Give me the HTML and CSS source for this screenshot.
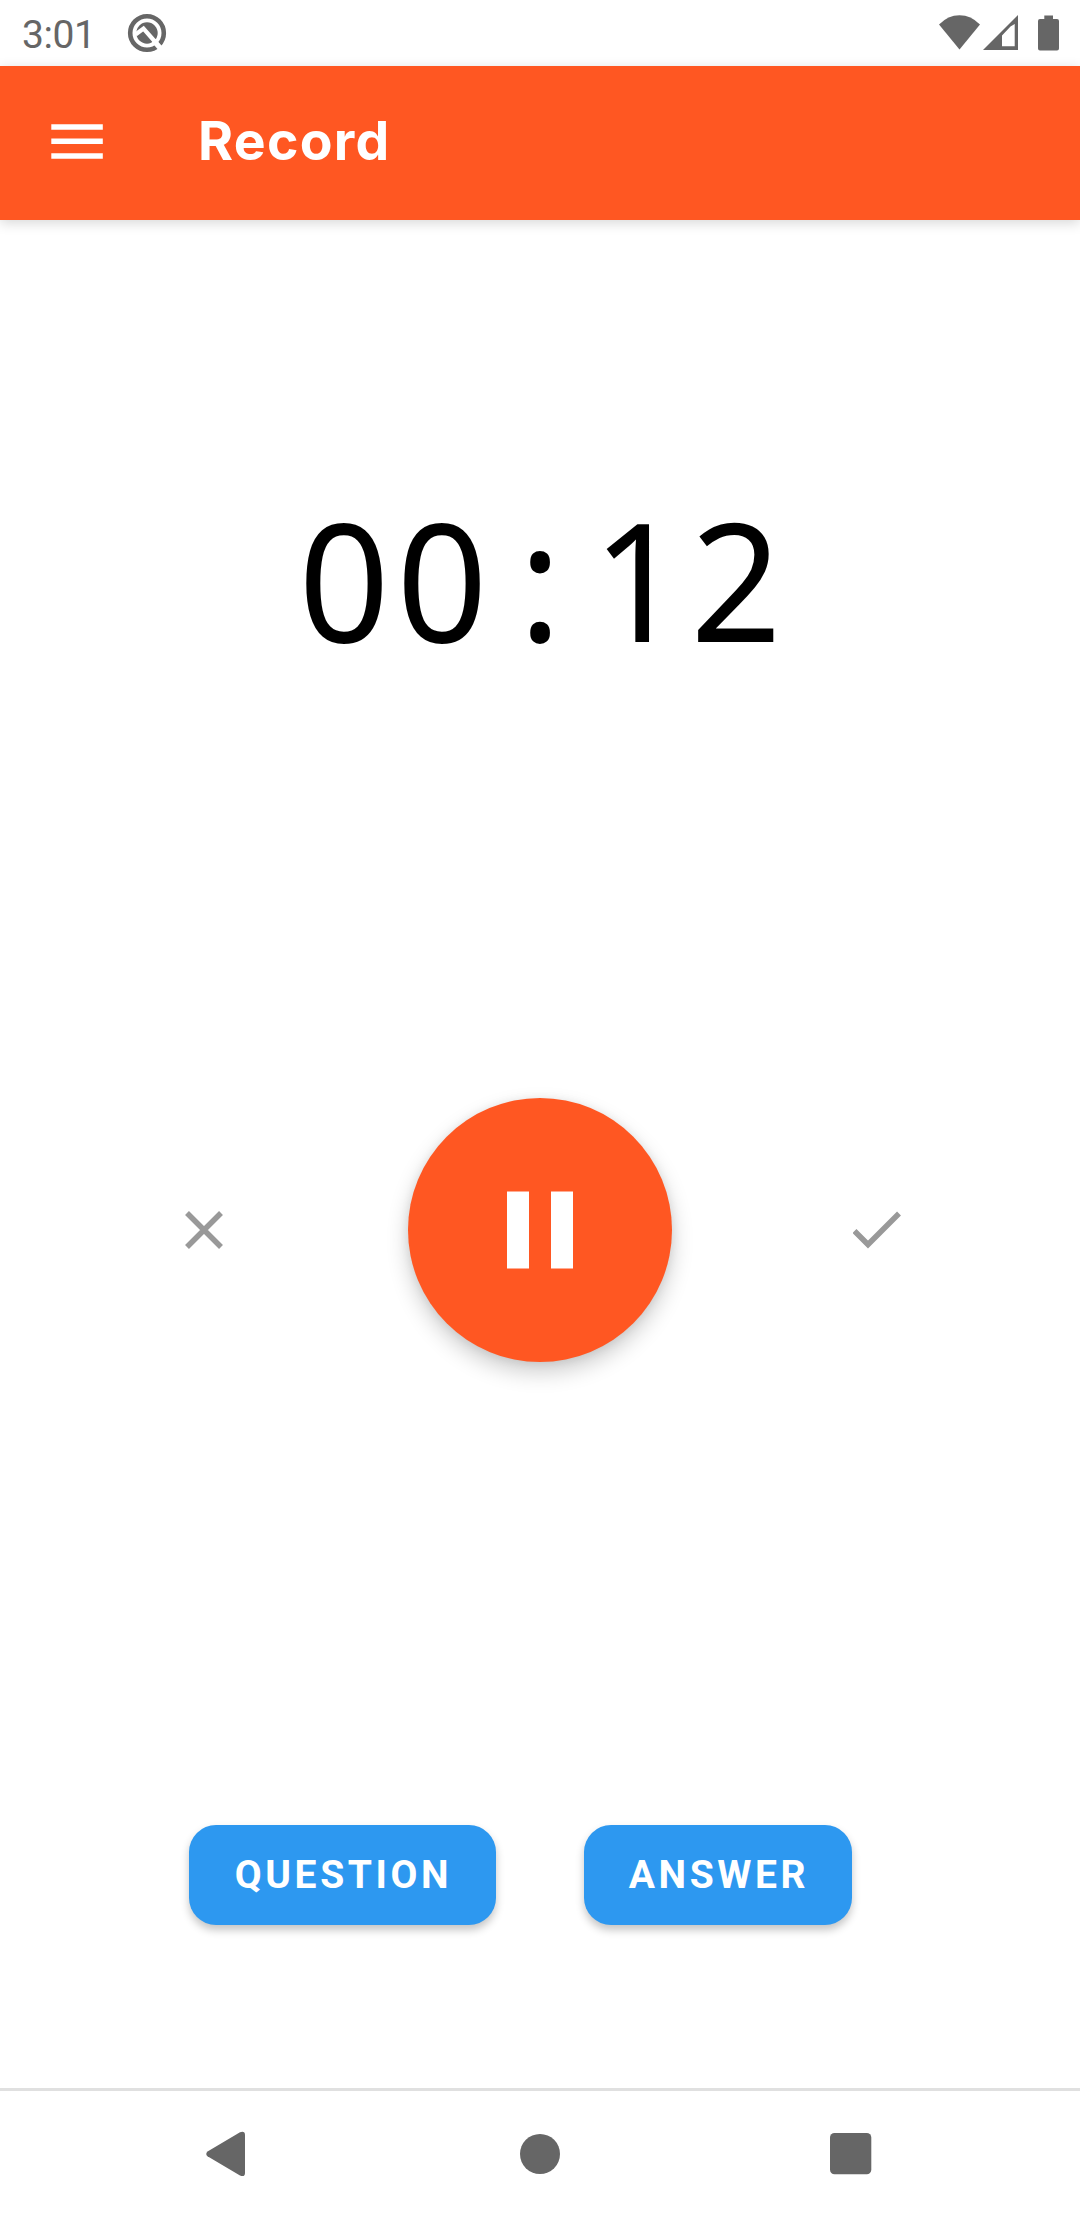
FILE: index.html
```html
<!DOCTYPE html>
<html lang="en">
<head>
<meta charset="utf-8">
<title>Record</title>
<link rel="stylesheet" href="styles.css">
</head>
<body>
<div class="screen">
  <header class="status">
    <span class="clock">3:01</span>
    <svg class="q-icon" width="40" height="40" viewBox="0 0 40 40">
      <circle cx="20" cy="20" r="16.8" fill="none" stroke="#666" stroke-width="4.6"/>
      <circle cx="20" cy="20" r="10.7" fill="#666"/>
      <path d="M8.500 21.500L16.500 15.500L34 35.500" fill="none" stroke="#fff" stroke-width="4.200"/>
      <path d="M26.500 27.500L33.500 35.500" stroke="#fff" stroke-width="5"/>
    </svg>
    <svg class="signals" width="124" height="40" viewBox="936 12 124 40" fill="#666">
      <path d="M958.500 49.500L938 24.500Q947 15.200 958.500 15.200T979 24.500Z"/>
      <path fill-rule="evenodd" d="M982 50L1017 15V50ZM1001 46.300H1013.700V24L1009.500 26.500L1001 35.500Z"/>
      <path d="M1043.300 15.500h8.700v3.500h4q2 0 2 2v27.500q0 2-2 2h-17q-2 0-2-2V21q0-2 2-2h4.300z"/>
    </svg>
  </header>
  <div class="appbar">
    <svg width="52" height="36" viewBox="0 0 52 36" fill="#fff">
      <path d="M.3 0.300h51.500v5.500H.3zM.3 14.500h51.500v5.500H.3zM.3 29.200h51.500v5.500H.3z"/>
    </svg>
    <h1>Record</h1>
  </div>
  <main>
    <div class="timer"><span>0</span><span>0</span><span>:</span><span>1</span><span>2</span></div>
    <div class="controls">
      <svg width="38" height="38" viewBox="0 0 38 38" fill="none" stroke="#999" stroke-width="5.500">
        <path d="M2 2L36 36M36 2L2 36"/>
      </svg>
      <button class="pause" aria-label="Pause">
        <svg width="66" height="78" viewBox="0 0 66 78" fill="#fff"><path d="M0 .5h22v77H0zM44 .5h22v77H44z"/></svg>
      </button>
      <svg width="48" height="38" viewBox="0 0 48 38" fill="none" stroke="#999" stroke-width="5.500">
        <path d="M1.500 20L15 33.500L46 2.500"/>
      </svg>
    </div>
    <div class="actions">
      <button class="btn question">QUESTION</button>
      <button class="btn answer">ANSWER</button>
    </div>
  </main>
  <nav>
    <svg width="40" height="46" viewBox="0 0 40 46" fill="#666">
      <path d="M1.500 20.500L34 1.200Q39 -.5 39 4V42Q39 46.500 34 44.500L1.500 25.300Q-1 23 1.500 20.500Z"/>
    </svg>
    <svg width="40" height="40" viewBox="0 0 40 40" fill="#666"><circle cx="20" cy="20" r="20"/></svg>
    <svg width="42" height="42" viewBox="0 0 42 42" fill="#666"><rect width="41.300" height="41.300" rx="4.500"/></svg>
  </nav>
</div>
</body>
</html>
```
FILE: styles.css
```css
* { box-sizing: border-box; }
body { margin: 0; background: #fff; font-family: Roboto, sans-serif; }
button { border: 0; padding: 0; font: inherit; color: #fff; }
svg { display: block; flex: none; }
.screen { width: 1080px; height: 2220px; display: flex; flex-direction: column; }
.status { height: 66px; display: flex; align-items: center; padding: 0 19px 0 22px; color: #666; }
.clock { width: 104.5px; font-size: 39px; line-height: 66px; padding-top: 3px; letter-spacing: -.4px; }
.signals { margin-left: auto; margin-top: -2px; }
.appbar {
  height: 154px; display: flex; align-items: center; padding-left: 51px; gap: 95px;
  background: #ff5722; color: #fff; box-shadow: 0 3px 12px rgba(0, 0, 0, .16);
}
.appbar svg { margin-top: -3px; }
h1 { margin: -5px 0 0; font: 700 53.5px/64px Inter, sans-serif; letter-spacing: 1.3px; }
main { flex: 1; display: flex; flex-direction: column; }
.timer {
  margin-top: 248px; height: 220px; display: grid; grid-template-columns: repeat(5, 98px);
  justify-content: center; text-align: center;
  font: 165px/220px "Noto Sans", sans-serif; color: #000;
}
.timer span { transform: scaleX(.965); }
.controls { margin-top: 410px; height: 264px; display: flex; align-items: center; padding-left: 185px; }
.pause {
  width: 264px; height: 264px; margin: 0 181px 0 185px; border-radius: 50%; background: #ff5722;
  display: grid; place-items: center;
  box-shadow: 0 10px 22px rgba(0, 0, 0, .2), 0 1px 10px rgba(0, 0, 0, .08);
}
.actions { margin-top: 463px; display: flex; gap: 88px; padding-left: 189px; }
.btn {
  height: 100px; border-radius: 27px; background: #2d98f0; line-height: 98px;
  font-size: 39px; font-weight: 700; letter-spacing: 3.6px; padding: 0 0 1px 2px;
  box-shadow: 0 5px 9px rgba(0, 0, 0, .23);
}
.question { width: 307px; }
.answer { width: 268px; }
nav {
  height: 132px; border-top: 3px solid #e0e0e0; display: flex; align-items: center;
  justify-content: space-between; padding: 0 208px 3px 206px;
}
nav svg:nth-child(2) { margin-left: 4px; }
```
